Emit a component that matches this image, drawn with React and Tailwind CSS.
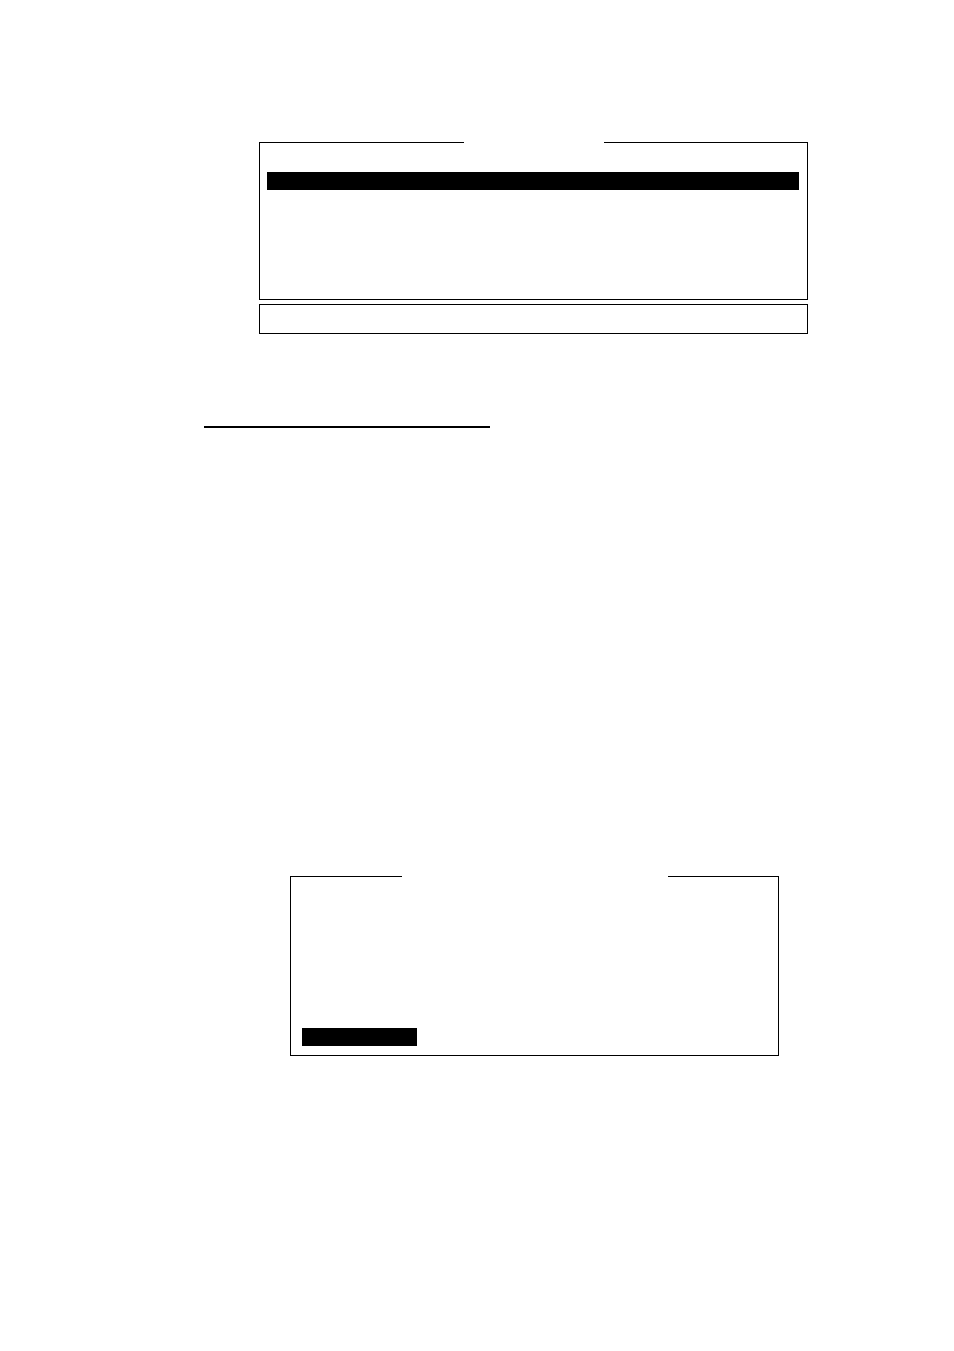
import React from 'react';

// Outlined panel whose top border is broken in the middle by a title slot
function Panel({ slotClass, className, children }) {
  return (
    <section className={className}>
      <div className="flex">
        <div className="flex-1 h-px bg-black" />
        <div className={`h-px ${slotClass}`} />
        <div className="flex-1 h-px bg-black" />
      </div>
      <div className="border-x border-b border-black">{children}</div>
    </section>
  );
}

export default function App() {
  return (
    <main className="min-h-screen bg-white pt-[142px] pl-[204px] pr-[146px]">
      <div className="ml-[55px] space-y-1">
        <Panel slotClass="w-[140px]">
          <div className="pt-[29px] pb-[109px] px-2 pl-[7px]">
            <div className="h-[18px] bg-black" />
          </div>
        </Panel>

        {/* Status line */}
        <div className="h-[30px] border border-black" />
      </div>

      {/* Heading underline */}
      <div className="mt-[92px] w-[286px] h-0.5 bg-black" />

      <Panel className="mt-[448px] ml-[86px] mr-[29px]" slotClass="w-[266px]">
        <div className="pt-[151px] pb-[9px] pl-[11px]">
          <div className="w-[115px] h-[18px] bg-black" />
        </div>
      </Panel>
    </main>
  );
}
